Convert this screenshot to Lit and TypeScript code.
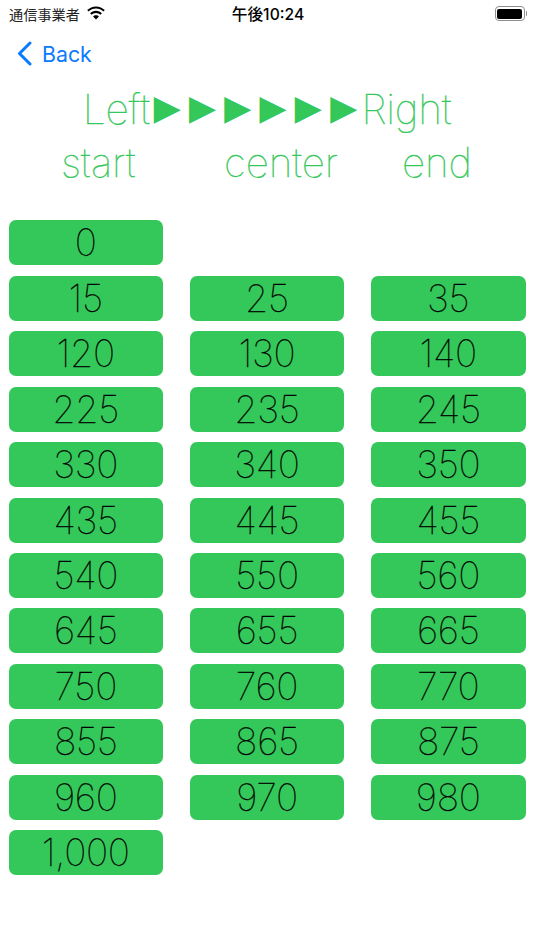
import { LitElement, html, css } from "lit";
import { customElement } from "lit/decorators.js";

const ROWS: (string | null)[][] = [
  ["0", null, null],
  ["15", "25", "35"],
  ["120", "130", "140"],
  ["225", "235", "245"],
  ["330", "340", "350"],
  ["435", "445", "455"],
  ["540", "550", "560"],
  ["645", "655", "665"],
  ["750", "760", "770"],
  ["855", "865", "875"],
  ["960", "970", "980"],
  ["1,000", null, null],
];

@customElement("app-root")
export class AppRoot extends LitElement {
  static styles = css`
    :host { display: block; width: 534px; height: 950px; background: #fff; overflow: hidden; font-family: Inter, "Noto Sans CJK JP", sans-serif; }
    .status { height: 27px; display: grid; grid-template-columns: 1fr auto 1fr; align-items: center; padding: 0 7px 0 9px; color: #000; }
    .carrier { display: flex; align-items: center; gap: 6px; font: 400 14.2px "Noto Sans CJK JP", sans-serif; color: #222; }
    .carrier svg { margin-top: -1px; }
    .time { font: 500 15.7px Inter, "Noto Sans CJK JP", sans-serif; }
    .battery { justify-self: end; display: flex; align-items: center; gap: 1px; }
    .batt-body { width: 25px; height: 10px; border: 1.2px solid #8e8e8e; border-radius: 4px; padding: 1.4px; box-sizing: content-box; display: flex; }
    .batt-fill { flex: 1; background: #000; border-radius: 2px; }
    .batt-tip { width: 1.5px; height: 5px; background: #8e8e8e; border-radius: 0 2px 2px 0; }
    .nav { height: 50px; display: flex; align-items: center; gap: 10px; padding-left: 17px; color: #0a7aff; font-size: 21.3px; font-weight: 400; box-sizing: border-box; padding-top: 3px; }
    .title { display: flex; justify-content: center; align-items: center; height: 57px; color: #34c759; font-size: 40.8px; font-weight: 100; -webkit-text-stroke: 0.35px #34c759; white-space: nowrap; margin-top: 3.5px; letter-spacing: -0.3px; }
    .tri { display: inline-block; font: 400 33px "Noto Sans CJK JP", sans-serif; letter-spacing: 2.3px; transform: scaleY(0.86); transform-origin: center; -webkit-text-stroke: 0; }
    .align { display: grid; grid-template-columns: repeat(3, 1fr); padding: 0 8.5px; height: 50px; align-items: center; color: #34c759; font-size: 40.5px; font-weight: 100; -webkit-text-stroke: 0.35px #34c759; letter-spacing: -0.1px; }
    .align span:nth-child(1) { padding-left: 52.5px; }
    .align span:nth-child(2) { text-align: center; padding-left: 28px; }
    .align span:nth-child(3) { text-align: right; padding-right: 53.5px; }
    .grid { display: grid; grid-template-columns: repeat(3, 154.5px); column-gap: 26.75px; row-gap: 10.45px; padding: 32.9px 8.5px 0; }
    .cell { height: 45px; background: #34c759; border-radius: 7px; color: #000; font-size: 37.5px; font-weight: 100; -webkit-text-stroke: 0.3px #000; display: flex; align-items: center; justify-content: center; letter-spacing: -0.3px; }
  `;

  render() {
    return html`
      <div class="status">
        <div class="carrier">
          <span>通信事業者</span>
          <svg width="20" height="14" viewBox="0 0 20 14" fill="#000">
            <path d="M10 2.6c2.9 0 5.5 1.1 7.4 3l1.4-1.5C16.500 1.800 13.400.4 10 .4S3.500 1.800 1.200 4.100l1.400 1.500c1.900-1.900 4.500-3 7.400-3z"/>
            <path d="M10 7c1.700 0 3.300.7 4.400 1.800l1.500-1.500C14.400 5.800 12.300 4.800 10 4.800S5.600 5.800 4.100 7.300l1.500 1.500C6.700 7.700 8.300 7 10 7z"/>
            <path d="M10 9.300c-1.200 0-2.200.5-2.900 1.200L10 13.500l2.900-3c-.7-.7-1.700-1.200-2.900-1.200z"/>
          </svg>
        </div>
        <div class="time">午後10:24</div>
        <div class="battery">
          <div class="batt-body"><div class="batt-fill"></div></div>
          <div class="batt-tip"></div>
        </div>
      </div>
      <div class="nav">
        <svg width="15" height="25" viewBox="0 0 15 25" fill="none" stroke="#0a7aff" stroke-width="3" stroke-linecap="round" stroke-linejoin="round">
          <path d="M13 2 L2.500 12.500 L13 23"/>
        </svg>
        <span>Back</span>
      </div>
      <div class="title">Left<span class="tri">▶▶▶▶▶▶</span>Right</div>
      <div class="align"><span>start</span><span>center</span><span>end</span></div>
      <div class="grid">
        ${ROWS.flat().map((v) => (v === null ? html`<div></div>` : html`<div class="cell">${v}</div>`))}
      </div>
    `;
  }
}
